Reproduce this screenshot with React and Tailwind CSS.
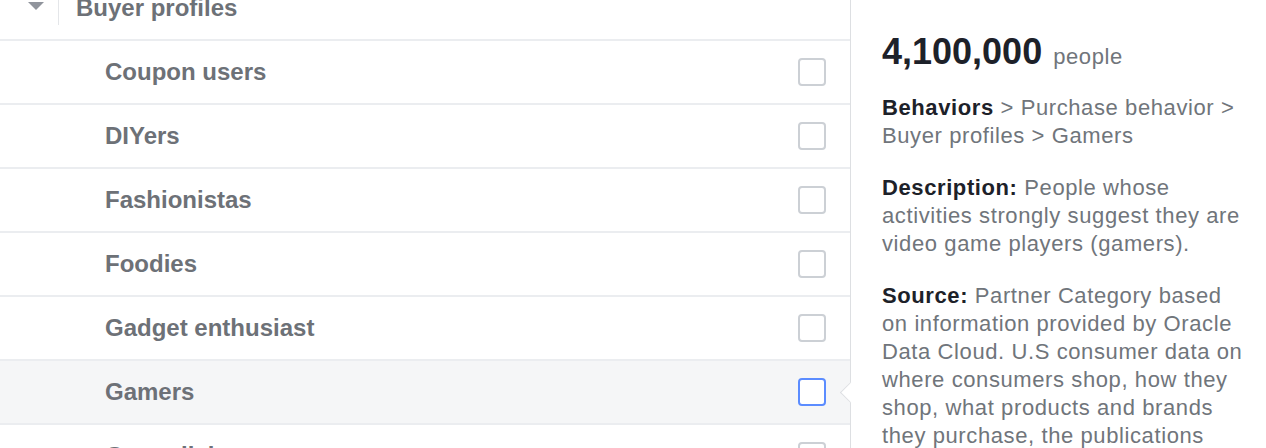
const profiles = ['Coupon users', 'DIYers', 'Fashionistas', 'Foodies', 'Gadget enthusiast', 'Gamers', 'Green living']

function Checkbox({ active }) {
    return (
        <div className={`w-[28px] h-[28px] rounded-[4px] border-2 bg-white ${active ? 'border-[#5b8cff]' : 'border-[#ccd0d5]'}`} />
    )
}

export default function App() {
    return (
        <div className="w-[1266px] h-[448px] overflow-hidden bg-white flex font-['Liberation_Sans',Arial,sans-serif]">

            {/* list */}
            <div className="w-[850px] shrink-0 -mt-[23px]">
                <div className="h-[64px] flex items-center pl-[28px] border-b-2 border-[#ebedf0]">
                    <div className="-mt-[4px] w-0 h-0 border-l-[8px] border-r-[8px] border-t-[8px] border-l-transparent border-r-transparent border-t-[#90949c]" />
                    <div className="ml-[14px] -mt-[14px] w-px h-[48px] bg-[#e4e6e9]" />
                    <span className="ml-[17px] text-[24px] font-bold text-[#6d7177]">Buyer profiles</span>
                </div>
                {profiles.map(name => (
                    <div
                        key={name}
                        className={`h-[64px] flex items-center justify-between pl-[105px] pr-[24px] border-b-2 border-[#ebedf0] ${name === 'Gamers' ? 'bg-[#f5f6f7]' : ''}`}>
                        <span className="text-[24px] font-bold text-[#6d7177]">{name}</span>
                        <Checkbox active={name === 'Gamers'} />
                    </div>
                ))}
            </div>

            {/* detail panel */}
            <div className="relative flex-1 border-l border-[#dddfe2] bg-white pl-[31px] pt-[30px] text-[22px] leading-[28px] tracking-[0.6px] text-[#70757b]">
                <div className="absolute -left-[8px] top-[385px] w-[15px] h-[15px] rotate-45 bg-white border-l border-b border-[#dddfe2]" />
                <div className="w-[368px]">
                    <div className="flex items-baseline gap-[11px] h-[44px] tracking-normal">
                        <span className="text-[36px] leading-[44px] font-bold text-[#1d2129]">4,100,000</span>
                        <span className="text-[22px] tracking-[0.6px]">people</span>
                    </div>
                    <p className="mt-[20px]">
                        <span className="font-bold text-[#1d2129]">Behaviors</span> &gt; Purchase behavior &gt; Buyer profiles &gt; Gamers
                    </p>
                    <p className="mt-[24px]">
                        <span className="font-bold text-[#1d2129]">Description:</span> People whose activities strongly suggest they are video game players (gamers).
                    </p>
                    <p className="mt-[24px]">
                        <span className="font-bold text-[#1d2129]">Source:</span> Partner Category based on information provided by Oracle Data Cloud. U.S consumer data on where consumers shop, how they shop, what products and brands they purchase, the publications they read and the media they consume.
                    </p>
                </div>
            </div>
        </div>
    )
}
